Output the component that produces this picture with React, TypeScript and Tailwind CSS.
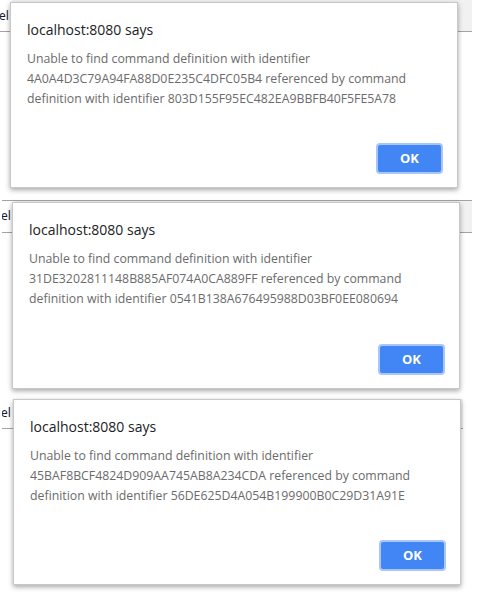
import React from 'react';

interface AlertShot {
    missing: string;
    owner: string;
    height: number;
    barTop: number;
    barHeight: number;
    barLeft: number;
    barWidth: number;
    barTopLine: boolean;
    elTop: number;
    left: number;
    top: number;
    boxHeight: number;
}

const shots: AlertShot[] = [
    {
        missing: '4A0A4D3C79A94FA88D0E235C4DFC05B4',
        owner: '803D155F95EC482EA9BBFB40F5FE5A78',
        height: 189,
        barTop: 0,
        barHeight: 32,
        barLeft: 0,
        barWidth: 472,
        barTopLine: false,
        elTop: 10,
        left: 10,
        top: 2,
        boxHeight: 186,
    },
    {
        missing: '31DE3202811148B885AF074A0CA889FF',
        owner: '0541B138A676495988D03BF0EE080694',
        height: 201,
        barTop: 11,
        barHeight: 33,
        barLeft: 2,
        barWidth: 472,
        barTopLine: true,
        elTop: 9,
        left: 12,
        top: 13,
        boxHeight: 187,
    },
    {
        missing: '45BAF8BCF4824D909AA745AB8A234CDA',
        owner: '56DE625D4A054B199900B0C29D31A91E',
        height: 208,
        barTop: 9,
        barHeight: 30,
        barLeft: 2,
        barWidth: 463,
        barTopLine: false,
        elTop: 8,
        left: 13,
        top: 9,
        boxHeight: 186,
    },
];

function Shot({ s }: { s: AlertShot }) {
    return (
        <div className="relative w-full overflow-visible" style={{ height: s.height }}>
            {/* page behind the dialog */}
            <div style={{ paddingTop: s.barTop, paddingLeft: s.barLeft }}>
                <div
                    className={`relative bg-[#f1f1f1] border-b border-[#a3a3a3] ${s.barTopLine ? 'border-t' : ''}`}
                    style={{ width: s.barWidth - s.barLeft, height: s.barHeight }}
                >
                    <div className="h-full w-[12px] bg-white overflow-hidden">
                        <span
                            className="block text-[12px] leading-none text-[#1a1a2e] -ml-[1px]"
                            style={{ paddingTop: s.elTop }}
                        >
                            el
                        </span>
                    </div>
                </div>
            </div>

            <div
                className="absolute w-[448px] bg-white border border-[#c8c8c8] shadow-[0_2px_5px_rgba(0,0,0,0.35)] pl-[16px] pr-[14px] pt-[17px] font-['Segoe_UI','Open_Sans',sans-serif] flex flex-col"
                style={{ left: s.left, top: s.top, height: s.boxHeight }}
            >
                <div className="text-[14px] leading-[20px] text-[#202124]">localhost:8080 says</div>
                <div className="mt-[9px] text-[12.3px] leading-[20px] text-[#6b6b6b]">
                    <div>Unable to find command definition with identifier</div>
                    <div>{s.missing} referenced by command</div>
                    <div>definition with identifier {s.owner}</div>
                </div>
                <div className="mt-auto mb-[13px] flex justify-end">
                    <button className="w-[67px] h-[31px] rounded-[4px] bg-[#4285f4] border-2 border-[#a9c6f8] text-white text-[13px] font-bold">
                        OK
                    </button>
                </div>
            </div>
        </div>
    );
}

export default function App() {
    return (
        <div className="w-[481px] h-[598px] bg-white overflow-hidden">
            {shots.map((s) => (
                <Shot key={s.missing} s={s} />
            ))}
        </div>
    );
}
